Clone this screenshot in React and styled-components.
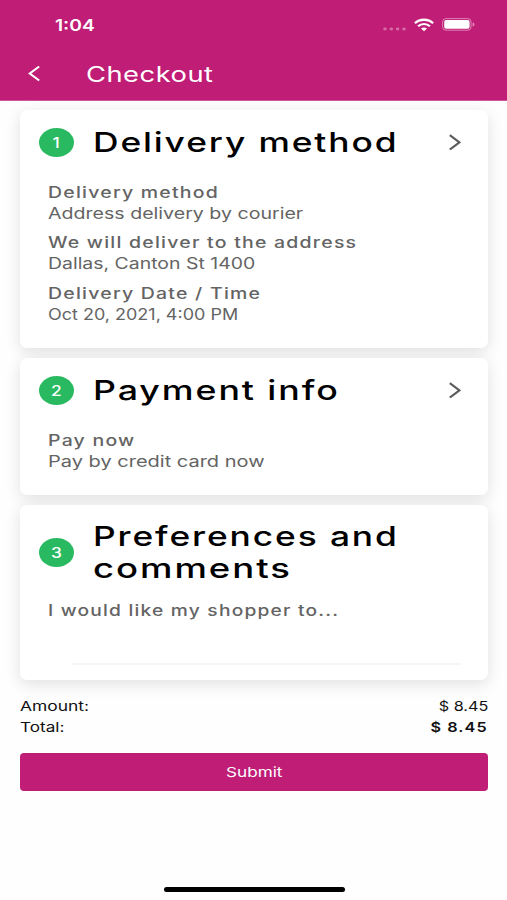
import React from 'react'
import styled, { createGlobalStyle } from 'styled-components'

const GlobalStyle = createGlobalStyle`
    * {
        box-sizing: border-box;
    }
    body {
        margin: 0;
        background: #fff;
        font-family: Inter, 'Liberation Sans', sans-serif;
    }
`

const Screen = styled.div`
    display: flex;
    flex-direction: column;
    width: 507px;
    height: 900px;
    overflow: hidden;
    background: #fefefe;
`

// wide lettering: the glyphs are stretched sideways from their anchored edge
const Text = styled.span`
    display: inline-block;
    vertical-align: top;
    white-space: nowrap;
    font-size: ${(props) => props.$size || 15.5}px;
    font-weight: ${(props) => props.$weight || 400};
    letter-spacing: ${(props) => props.$track || 0}px;
    transform: scaleX(${(props) => props.$stretch || 1.2});
    transform-origin: ${(props) => props.$origin || 'left'} center;
`

const Header = styled.header`
    flex: none;
    height: 101px;
    background: #c01d77;
    border-bottom: 1px solid #d0569a;
    color: #fff;
`

const StatusBar = styled.div`
    display: flex;
    align-items: center;
    justify-content: space-between;
    height: 49px;
    padding: 0 32px 0 55px;
`

const StatusIcons = styled.div`
    display: flex;
    align-items: center;
    gap: 8px;
`

const NavBar = styled.div`
    display: flex;
    align-items: center;
    height: 50px;
    padding-left: 28px;
    gap: 46px;
`

const Content = styled.main`
    display: flex;
    flex-direction: column;
    gap: 10px;
    padding: 9px 19px 0 20px;
`

const Card = styled.section`
    height: ${(props) => props.$height}px;
    padding: ${(props) => props.$top || 16}px 19px 0;
    border-radius: 7px;
    background: #fff;
    box-shadow: 0 4px 16px rgba(0, 0, 0, 0.12);
`

const CardHead = styled.div`
    display: flex;
    align-items: center;
    padding-right: 8px;
`

const Badge = styled.div`
    display: flex;
    align-items: center;
    justify-content: center;
    width: 35px;
    height: 29px;
    margin-right: 19px;
    border-radius: 50%;
    background: #29ba61;
    color: #fff;
`

const Title = styled.h2`
    flex: 1;
    display: flex;
    flex-direction: column;
    margin: 0;
    line-height: 32px;
    color: #000;
`

const CardBody = styled.div`
    display: flex;
    flex-direction: column;
    gap: 8px;
    padding: ${(props) => props.$top || 23.5}px 9px 0;
    color: #646464;
`

const Detail = styled.div`
    display: flex;
    flex-direction: column;
    line-height: 21.3px;
`

const NoteLine = styled.div`
    height: 2px;
    margin: 34px -1px 0 24px;
    background: #f6f6f6;
`

const Totals = styled.div`
    display: flex;
    flex-direction: column;
    padding-top: 6px;
    color: #111;
`

const TotalRow = styled.div`
    display: flex;
    justify-content: space-between;
    line-height: 21px;
`

const SubmitButton = styled.button`
    height: 38px;
    margin-top: 5px;
    border: none;
    border-radius: 4px;
    background: #c01d77;
    color: #fff;
    font-family: inherit;
`

const HomeBar = styled.div`
    width: 181px;
    height: 5px;
    margin: auto auto 8px 164px;
    border-radius: 3px;
    background: #000;
`

const DotsIcon = styled.svg`
    margin: 8px -1px 0 0;
`

const Dots = () => (
    <DotsIcon width="24" height="4" viewBox="0 0 24 4">
        {[2, 8.3, 14.6, 21].map((x) => (
            <ellipse key={x} cx={x} cy="2" rx="1.8" ry="1.4" fill="#fff" opacity="0.35" />
        ))}
    </DotsIcon>
)

const Wifi = () => (
    <svg width="20" height="14" viewBox="0 0 20 14" fill="none" stroke="#fff">
        <path d="M0.9 5.2C5.5 0.6 14.5 0.6 19.1 5.2" strokeWidth="2.3" />
        <path d="M4.1 8.3C7.4 5.2 12.6 5.2 15.9 8.3" strokeWidth="2.2" />
        <path d="M7 10.6C8.7 9 11.3 9 13 10.6L10 13.2z" fill="#fff" stroke="none" />
    </svg>
)

const Battery = () => (
    <svg width="33" height="13" viewBox="0 0 33 13">
        <rect x="0.6" y="0.6" width="28.5" height="11.6" rx="3.4" fill="none" stroke="#fff" strokeOpacity="0.45" />
        <rect x="2.2" y="2" width="25.4" height="8.8" rx="2" fill="#fff" />
        <path d="M30.6 4.4C33 5 33 7.8 30.6 8.4z" fill="#fff" opacity="0.5" />
    </svg>
)

const BackArrow = () => (
    <svg width="12" height="16" viewBox="0 0 12 16" fill="none" stroke="#fff" strokeWidth="2.1">
        <path d="M11.2 0.5L1.8 7.5L11.2 14.5" />
    </svg>
)

const Chevron = () => (
    <svg width="12" height="16" viewBox="0 0 12 16" fill="none" stroke="#5c5c5c" strokeWidth="2.1">
        <path d="M0.8 1.2L10.4 8.4L0.8 15.6" />
    </svg>
)

const details = [
    { label: 'Delivery method', value: 'Address delivery by courier', wide: 1.264 },
    { label: 'We will deliver to the address', value: 'Dallas, Canton St 1400', wide: 1.254 },
    { label: 'Delivery Date / Time', value: 'Oct 20, 2021, 4:00 PM', wide: 1.16 },
]

const Info = ({ label, value, wide, labelWide = 1.257 }) => (
    <Detail>
        <div><Text $weight={500} $track={0.97} $stretch={labelWide}>{label}</Text></div>
        {value && <div><Text $stretch={wide}>{value}</Text></div>}
    </Detail>
)

const Head = ({ step, lines, arrow }) => (
    <CardHead>
        <Badge><Text $size={14.5} $weight={500} $origin="center">{step}</Text></Badge>
        <Title>
            {lines.map(({ text, wide }) => (
                <div key={text}><Text $size={27.5} $weight={500} $track={1.47} $stretch={wide}>{text}</Text></div>
            ))}
        </Title>
        {arrow && <Chevron />}
    </CardHead>
)

const App = () => {
    return (
        <Screen>
            <GlobalStyle />
            <Header>
                <StatusBar>
                    <Text $size={16} $weight={600}>1:04</Text>
                    <StatusIcons>
                        <Dots />
                        <Wifi />
                        <Battery />
                    </StatusIcons>
                </StatusBar>
                <NavBar>
                    <BackArrow />
                    <Text $size={21} $track={0.4} $stretch={1.3}>Checkout</Text>
                </NavBar>
            </Header>
            <Content>
                <Card $height={238}>
                    <Head step="1" lines={[{ text: 'Delivery method', wide: 1.285 }]} arrow />
                    <CardBody>
                        {details.map((item) => <Info key={item.label} {...item} />)}
                    </CardBody>
                </Card>
                <Card $height={137}>
                    <Head step="2" lines={[{ text: 'Payment info', wide: 1.3 }]} arrow />
                    <CardBody>
                        <Info label="Pay now" value="Pay by credit card now" wide={1.29} />
                    </CardBody>
                </Card>
                <Card $height={175} $top={15}>
                    <Head
                        step="3"
                        lines={[
                            { text: 'Preferences and', wide: 1.285 },
                            { text: 'comments', wide: 1.328 },
                        ]}
                    />
                    <CardBody $top={16}>
                        <Info label="I would like my shopper to..." labelWide={1.238} />
                        <NoteLine />
                    </CardBody>
                </Card>
                <Totals>
                    <TotalRow>
                        <Text $size={13.5} $stretch={1.29}>Amount:</Text>
                        <Text $size={13.5} $origin="right">$ 8.45</Text>
                    </TotalRow>
                    <TotalRow>
                        <Text $size={13.5} $stretch={1.27}>Total:</Text>
                        <Text $size={13.5} $weight={600} $track={0.9} $origin="right">$ 8.45</Text>
                    </TotalRow>
                </Totals>
                <SubmitButton><Text $size={13.5} $stretch={1.27} $origin="center">Submit</Text></SubmitButton>
            </Content>
            <HomeBar />
        </Screen>
    )
}

export default App
